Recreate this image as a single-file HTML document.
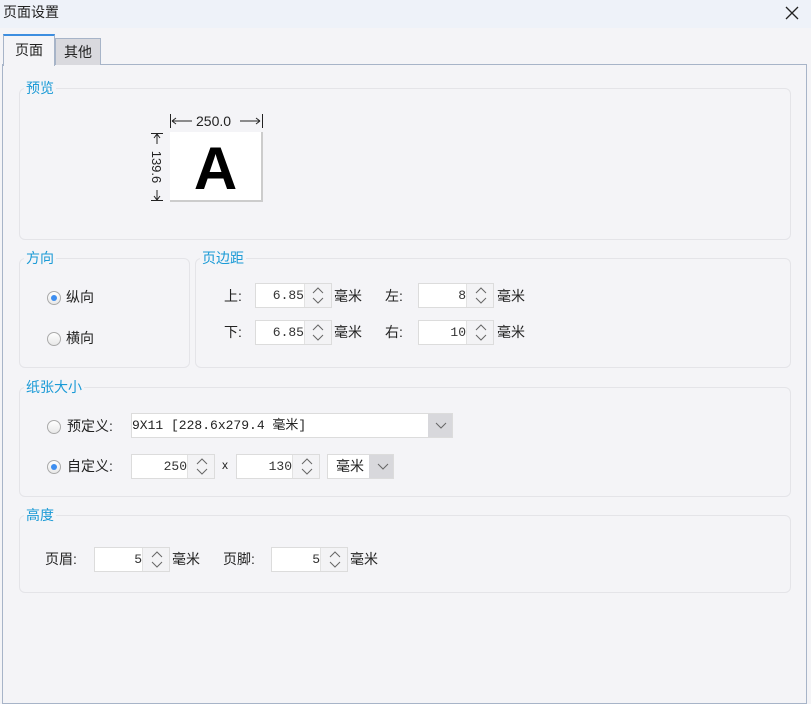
<!DOCTYPE html>
<html><head><meta charset="utf-8"><style>
*{box-sizing:border-box;margin:0;padding:0}
body{width:811px;height:701px;overflow:hidden;background:#f4f4f7;font-family:"Liberation Sans","Noto Sans CJK SC",sans-serif;font-size:14px;color:#222;position:relative}
.a{position:absolute}
.title{left:0;top:0;width:811px;height:28px;background:#eef2f9}
.grp{position:absolute;border:1px solid #e4e4e8;border-radius:6px}
.lg{position:absolute;top:-11px;left:4px;padding:0 2px;background:#f4f4f7;color:#1a9ad6;font-size:14px;line-height:20px}
.lbl{position:absolute;font-size:14px;line-height:20px}
.spin{position:absolute;height:25px;border:1px solid #dcdcdc;background:#fff}
.spin .v{position:absolute;right:27px;top:0;line-height:23px;font-family:"Liberation Mono","Noto Sans CJK SC",monospace;font-size:13px;color:#333}
.spin .b{position:absolute;right:0;top:0;width:27px;height:23px;background:#f3f3f5;border-left:1px solid #e2e2e2}
.radio{position:absolute;width:14px;height:14px;border-radius:50%;border:1px solid #aaa;background:linear-gradient(#fff,#e8e8e8)}
.radio.on::after{content:"";position:absolute;left:3px;top:3px;width:6px;height:6px;border-radius:50%;background:#3d8ef0}
.sel{position:absolute;height:25px;background:#fff;border:1px solid #dcdcdc}
.sel .b{position:absolute;right:0;top:0;width:24px;height:23px;background:#d8d8dc}
</style></head><body>
<div class="a title"></div>
<div class="a" style="left:3px;top:3px;font-size:14px;line-height:18px">页面设置</div>
<svg class="a" style="left:785px;top:6px" width="14" height="14"><path d="M1 1L13 13M13 1L1 13" stroke="#222" stroke-width="1.3"/></svg>

<div class="a" style="left:2px;top:64px;width:805px;height:640px;border:1px solid #a7b4c8;background:#f4f4f7"></div>
<div class="a" style="left:55px;top:38px;width:46px;height:27px;background:#d9d9de;border:1px solid #a7b4c8;border-bottom:none;text-align:center;line-height:27px">其他</div>
<div class="a" style="left:3px;top:34px;width:52px;height:32px;background:#f4f4f7;border:1px solid #a7b4c8;border-top:2px solid #3d8ee0;border-bottom:none;text-align:center;line-height:28px">页面</div>

<div class="grp" style="left:19px;top:88px;width:772px;height:152px"><div class="lg">预览</div></div>
<div class="a" style="left:196px;top:112px;font-size:14px;line-height:18px;white-space:nowrap">250.0</div>
<div class="a" style="left:170px;top:132px;width:93px;height:70px;background:#fff;border-right:2px solid #ccc;border-bottom:2px solid #ccc;text-align:center;font-weight:900;font-size:60px;line-height:74px;color:#000">A</div>
<div class="a" style="left:148px;top:132px;width:18px;height:70px">
<div class="a" style="left:-22px;top:27px;width:60px;transform:rotate(90deg);font-size:13px;text-align:center;line-height:16px">139.6</div>
</div>

<div class="grp" style="left:19px;top:258px;width:171px;height:110px"><div class="lg">方向</div></div>
<div class="radio on" style="left:47px;top:291px"></div><div class="lbl" style="left:66px;top:287px">纵向</div>
<div class="radio" style="left:47px;top:332px"></div><div class="lbl" style="left:66px;top:328px">横向</div>

<div class="grp" style="left:195px;top:258px;width:596px;height:110px"><div class="lg">页边距</div></div>
<div class="lbl" style="left:224px;top:286px">上:</div>
<div class="spin" style="left:255px;top:283px;width:77px"><span class="v">6.85</span><div class="b"></div></div>
<div class="lbl" style="left:334px;top:286px">毫米</div>
<div class="lbl" style="left:385px;top:286px">左:</div>
<div class="spin" style="left:418px;top:283px;width:76px"><span class="v">8</span><div class="b"></div></div>
<div class="lbl" style="left:497px;top:286px">毫米</div>
<div class="lbl" style="left:224px;top:322px">下:</div>
<div class="spin" style="left:255px;top:320px;width:77px"><span class="v">6.85</span><div class="b"></div></div>
<div class="lbl" style="left:334px;top:322px">毫米</div>
<div class="lbl" style="left:385px;top:322px">右:</div>
<div class="spin" style="left:418px;top:320px;width:76px"><span class="v">10</span><div class="b"></div></div>
<div class="lbl" style="left:497px;top:322px">毫米</div>

<div class="grp" style="left:19px;top:387px;width:772px;height:110px"><div class="lg">纸张大小</div></div>
<div class="radio" style="left:47px;top:420px"></div><div class="lbl" style="left:67px;top:416px">预定义:</div>
<div class="sel" style="left:131px;top:413px;width:322px"><span class="a" style="left:0;top:0;line-height:23px;font-family:'Liberation Mono','Noto Sans CJK SC',monospace;font-size:13px">9X11 [228.6x279.4 毫米]</span><div class="b"></div></div>
<div class="radio on" style="left:47px;top:460px"></div><div class="lbl" style="left:67px;top:456px">自定义:</div>
<div class="spin" style="left:131px;top:454px;width:84px"><span class="v">250</span><div class="b"></div></div>
<div class="lbl" style="left:222px;top:455px;font-size:12px">x</div>
<div class="spin" style="left:236px;top:454px;width:84px"><span class="v">130</span><div class="b"></div></div>
<div class="sel" style="left:327px;top:454px;width:67px"><span class="a" style="left:8px;top:0;line-height:23px">毫米</span><div class="b"></div></div>

<div class="grp" style="left:19px;top:515px;width:772px;height:78px"><div class="lg">高度</div></div>
<div class="lbl" style="left:45px;top:549px">页眉:</div>
<div class="spin" style="left:94px;top:547px;width:76px"><span class="v">5</span><div class="b"></div></div>
<div class="lbl" style="left:172px;top:549px">毫米</div>
<div class="lbl" style="left:223px;top:549px">页脚:</div>
<div class="spin" style="left:271px;top:547px;width:77px"><span class="v">5</span><div class="b"></div></div>
<div class="lbl" style="left:350px;top:549px">毫米</div>

<svg class="a" style="left:0;top:0" width="811" height="701">
<g fill="none" stroke="#666" stroke-width="1">
<path d="M313 293l5-5 5 5M313 298l5 5 5-5"/><path d="M476 293l5-5 5 5M476 298l5 5 5-5"/>
<path d="M313 330l5-5 5 5M313 335l5 5 5-5"/><path d="M476 330l5-5 5 5M476 335l5 5 5-5"/>
<path d="M197 464l5-5 5 5M197 469l5 5 5-5"/><path d="M302 464l5-5 5 5M302 469l5 5 5-5"/>
<path d="M152 557l5-5 5 5M152 562l5 5 5-5"/><path d="M330 557l5-5 5 5M330 562l5 5 5-5"/>
<path d="M436 423l5 5 5-5"/><path d="M378 464l5 5 5-5"/>
<g stroke="#222">
<path d="M170.5 114v14M262.5 114v14M172 121h20M172 121l4-3M172 121l4 3M240 121h20M260 121l-4-3M260 121l-4 3"/>
<path d="M151 133.5h12M157 134v10M154 138l3-4 3 4M151 200.5h12M157 200v-10M154 196l3 4 3-4"/>
</g>
</g></svg>
</body></html>
